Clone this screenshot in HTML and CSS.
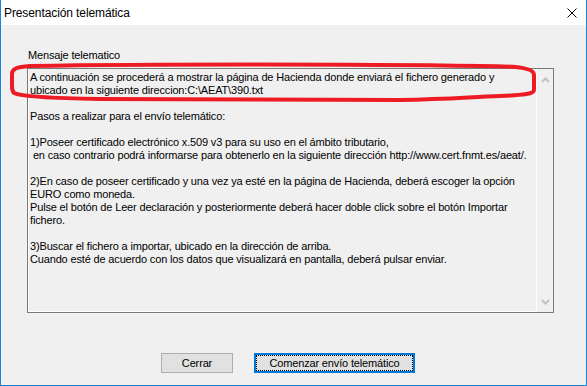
FILE: index.html
```html
<!DOCTYPE html>
<html lang="es">
<head>
  <meta charset="UTF-8" />
  <title>Presentación telemática</title>
  <link rel="stylesheet" href="styles.css">
</head>
<body>
  <div class="window">
    <div class="titlebar">
      <span class="title">Presentación telemática</span>
      <svg class="close" width="10" height="10" viewBox="0 0 10 10"><path d="M0.5 0.5 L9.5 9.5 M9.5 0.5 L0.5 9.5" stroke="#000" stroke-width="1" fill="none"/></svg>
    </div>

    <div class="content">
      <div class="label">Mensaje telematico</div>
      <div class="box">
        <div class="text">A continuación se procederá a mostrar la página de Hacienda donde enviará el fichero generado y
ubicado en la siguiente direccion:C:\AEAT\390.txt

Pasos a realizar para el envío telemático:

1)Poseer certificado electrónico x.509 v3 para su uso en el ámbito tributario,
 en caso contrario podrá informarse para obtenerlo en la siguiente dirección http://www.cert.fnmt.es/aeat/.

2)En caso de poseer certificado y una vez ya esté en la página de Hacienda, deberá escoger la opción
EURO como moneda.
Pulse el botón de Leer declaración y posteriormente deberá hacer doble click sobre el botón Importar
fichero.

3)Buscar el fichero a importar, ubicado en la dirección de arriba.
Cuando esté de acuerdo con los datos que visualizará en pantalla, deberá pulsar enviar.</div>
        <div class="scroll">
          <svg width="9" height="6" viewBox="0 0 9 6"><path d="M1 5 L4.5 1.5 L8 5" stroke="#c2c2c2" stroke-width="2" fill="none"/></svg>
          <svg width="9" height="6" viewBox="0 0 9 6"><path d="M1 1 L4.5 4.5 L8 1" stroke="#c2c2c2" stroke-width="2" fill="none"/></svg>
        </div>
      </div>

      <div class="buttons">
        <button class="btn">Cerrar</button>
        <button class="btn btn-default"><span class="focus">Comenzar envío telemático</span></button>
      </div>
    </div>

    <!-- red marker drawn over the first message lines -->
    <svg class="marker" width="587" height="386" viewBox="0 0 587 386">
      <path d="M30 66 C150 64 350 64 480 66 C520 66 534 68 534 75 L534 90 C534 94 525 95 500 96 C470 97 450 99 400 100 L100 99 C40 98 20 96 14 93 C12 91 12 89 12 86 L12 74 C12 69 16 67 30 66 Z" stroke="#ed1c24" stroke-width="4" fill="none"/>
    </svg>
  </div>
</body>
</html>
```

FILE: styles.css
```css
:root {
  --face: #f0f0f0;
  --edge: #7a7a7a;
  --accent: #1883d7;
  --btn: #e1e1e1;
}
* {
  box-sizing: border-box;
}
body {
  margin: 0;
  padding: 0;
  font-family: 'Liberation Sans', Arial, sans-serif;
  font-size: 11px;
  color: #000;
  background: #fff;
}
.window {
  position: relative;
  width: 587px;
  height: 386px;
  border: 1px solid var(--accent);
  border-top: none;
  background: var(--face);
  display: flex;
  flex-direction: column;
}
.titlebar {
  height: 25px;
  background: #fff;
  display: flex;
  align-items: center;
  justify-content: space-between;
  padding: 0 9px 0 3px;
}
.title {
  font-size: 12px;
  letter-spacing: -0.1px;
}
.close {
  display: block;
}
.content {
  flex: 1;
  padding: 24px 0 0 26px;
}
.label {
  line-height: 13px;
  margin: 0 0 6px 1px;
  letter-spacing: -0.15px;
}
.box {
  width: 527px;
  height: 245px;
  border: 1px solid var(--edge);
  display: flex;
}
.text {
  flex: 1;
  border-left: 1px solid #fff;
  border-bottom: 1px solid #fff;
  padding: 2px 0 0 1px;
  line-height: 13px;
  letter-spacing: -0.16px;
  white-space: pre;
  overflow: hidden;
}
.scroll {
  width: 17px;
  border-left: 1px solid #fff;
  display: flex;
  flex-direction: column;
  justify-content: space-between;
  align-items: center;
  padding: 8px 0 7px;
}
.scroll svg {
  display: block;
}
.buttons {
  display: flex;
  gap: 21px;
  margin: 40px 0 0 134px;
}
.btn {
  height: 20px;
  width: 72px;
  padding: 0;
  font-family: inherit;
  font-size: 11px;
  letter-spacing: -0.15px;
  background: var(--btn);
  border: 1px solid #adadad;
  color: #000;
}
.btn-default {
  width: 161px;
  border: 2px solid #0078d7;
}
.focus {
  display: flex;
  align-items: center;
  justify-content: center;
  height: 100%;
  border: 1px dotted #000;
}
.marker {
  position: absolute;
  top: 0;
  left: -1px;
  pointer-events: none;
}
```
